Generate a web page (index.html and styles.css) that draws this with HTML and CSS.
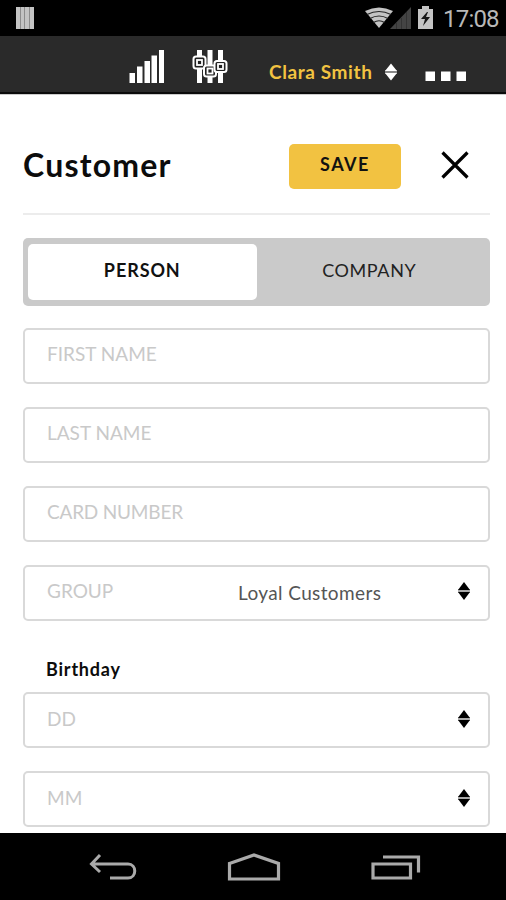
FILE: index.html
```html
<!DOCTYPE html>
<html lang="en">
<head>
<meta charset="utf-8">
<title>Customer</title>
<link rel="stylesheet" href="styles.css">
</head>
<body>
<div class="screen">
  <div class="status">
    <svg class="bars" width="18" height="22" viewBox="0 0 18 22"><path fill="#c4c4c4" d="M0 0h18v22H0z"/><path stroke="#8d8d8d" d="M4.5 0v22M8.5 0v22M13.5 0v22"/></svg>
    <svg class="signals" width="72" height="24" viewBox="0 0 72 24">
      <path fill="#c4c4c4" d="M0 5Q14-2 28 5L14 22z"/>
      <path fill="none" stroke="#262626" stroke-width="1.2" d="M2 8.500Q14 2.500 26 8.500M5 12.500Q14 7.500 23 12.500M8.500 16.500Q14 13 19.500 16.500"/>
      <path fill="#444" d="M46 1v22H25z"/><path stroke="#333" d="M31.500 17v6M36.500 12v11M41.500 6v17"/>
      <path fill="#c4c4c4" d="M57 0h7v3h4v20H53V3h4z"/><path fill="#171717" d="M62 6l-6 7h4l-2 7 7-9h-4l2-5z"/>
    </svg>
    <span class="clock">17:08</span>
  </div>
  <header class="topbar">
    <svg class="chart" width="36" height="36" viewBox="0 0 36 36"><path fill="#fff" d="M.5 24H6v10H.500zM8 17.500h5.500V34H8zM15.500 12H21v22h-5.500zM22.500 6.500H28V34h-5.500zM30 1h5v33h-5z"/></svg>
    <svg class="sliders" width="36" height="36" viewBox="0 0 36 36"><path fill="#fff" d="M5 1h5v33H5zM15.500 1h5v33h-5zM26 1h5v33h-5z"/><g fill="#222" stroke="#fff" stroke-width="2"><rect x="1.500" y="7.500" width="12" height="12" rx="2.500"/><rect x="12" y="16.500" width="12" height="11" rx="2.500"/><rect x="22.500" y="12" width="12" height="11" rx="2.500"/></g><g fill="#222" stroke="#fff" stroke-width="1.800"><rect x="5" y="11" width="5" height="5"/><rect x="15.500" y="19.500" width="5" height="5"/><rect x="26" y="15" width="5" height="5"/></g></svg>
    <span class="user">Clara Smith</span>
    <svg class="updown" width="12" height="18" viewBox="0 0 12 18"><path fill="#888" d="M0 7h12v4H0z"/><path fill="#fff" d="M6 .5L12 8H0zM0 10h12l-6 7.500z"/></svg>
    <svg class="more" width="42" height="10" viewBox="0 0 42 10"><path fill="#fff" d="M.5.5H10V10H.500zM16 .500h9.500V10H16zM31.500.500H41V10h-9.500z"/></svg>
  </header>
  <main class="page">
    <div class="heading">
      <h1>Customer</h1>
      <button class="save"><span>SAVE</span></button>
      <svg class="close" width="28" height="28" viewBox="0 0 28 28"><path stroke="#000" stroke-width="3.2" d="M1.500 1.500l25 25M26.500 1.500l-25 25"/></svg>
    </div>
    <div class="tabs"><div class="tab active"><span class="person">PERSON</span></div><div class="tab"><span class="company">COMPANY</span></div></div>
    <div class="field"><span class="first">FIRST NAME</span></div>
    <div class="field"><span class="last">LAST NAME</span></div>
    <div class="field"><span class="card">CARD NUMBER</span></div>
    <div class="field"><span class="group">GROUP</span><span class="value">Loyal Customers</span>
      <svg class="pick" width="12" height="18" viewBox="0 0 12 18"><path fill="#aaa" d="M0 7h12v4H0z"/><path fill="#000" d="M6 0L12 8H0zM0 10h12l-6 8z"/></svg></div>
    <h2>Birthday</h2>
    <div class="field date"><span class="day">DD</span>
      <svg class="pick" width="12" height="18" viewBox="0 0 12 18"><path fill="#aaa" d="M0 7h12v4H0z"/><path fill="#000" d="M6 0L12 8H0zM0 10h12l-6 8z"/></svg></div>
    <div class="field date"><span class="month">MM</span>
      <svg class="pick" width="12" height="18" viewBox="0 0 12 18"><path fill="#aaa" d="M0 7h12v4H0z"/><path fill="#000" d="M6 0L12 8H0zM0 10h12l-6 8z"/></svg></div>
  </main>
  <nav class="nav">
    <svg width="48" height="28" viewBox="0 0 48 28"><path fill="none" stroke="#aaa" stroke-width="3" d="M11 2L2.500 11 11 19M3 11h36c9 0 9 14 0 14H21"/></svg>
    <svg width="54" height="28" viewBox="0 0 54 28"><path fill="none" stroke="#aaa" stroke-width="3.200" d="M2.500 10.500L27 2l24.500 8.500V26h-49z"/></svg>
    <svg width="50" height="28" viewBox="0 0 50 28"><path fill="none" stroke="#aaa" stroke-width="3.200" d="M2 11h37.500v14H2zM12 4h35.500v15.500"/></svg>
  </nav>
</div>
</body>
</html>
```
FILE: styles.css
```css
* { box-sizing: border-box; }
body { margin: 0; background: #fff; color: #0c0c0c; font-family: Lato, sans-serif; }
.screen { width: 506px; height: 900px; display: flex; flex-direction: column; overflow: hidden; }
svg { display: block; flex: none; }
span, h1, h2 { white-space: nowrap; }
.status { height: 36px; flex: none; background: #000; display: flex; align-items: center; padding: 0 7px 0 16px; }
.signals { margin-left: auto; margin-right: 6px; }
.clock { font: 24px/36px Roboto, sans-serif; color: #b8b8b8; letter-spacing: -0.8px; width: 56px; padding-top: 2px; }
.topbar { height: 58px; flex: none; background: #2a2a2a; border-bottom: 2px solid #0b0b0b; display: flex; align-items: flex-start; padding: 13px 0 0 129px; }
.sliders { margin-left: 27px; }
.user { margin: 11px 0 0 41px; width: 116px; font-size: 19px; line-height: 24px; font-weight: 700; color: #f2c341; letter-spacing: 0.6px; }
.updown { margin-top: 14px; }
.more { margin: 22px 0 0 28px; }
.page { flex: 1; min-height: 0; padding: 0 16px 0 23px; overflow: hidden; border-top: 1px solid #ccc; }
.heading { height: 120px; border-bottom: 2px solid #ececec; display: flex; align-items: flex-start; }
h1 { margin: 50px 0 0; width: 266px; font-size: 32px; line-height: 40px; font-weight: 700; letter-spacing: 1.2px; }
.save { margin: 49px 40px 0 0; width: 112px; height: 45px; padding: 0 0 6px; border: 0; border-radius: 5px; background: #f2c241; color: #111; font: 700 18px/22px Lato, sans-serif; letter-spacing: 1.5px; }
.close { margin-top: 56px; }
.tabs { margin: 23px 0 22px; height: 68px; border-radius: 5px; padding: 6px 5px; background: #cacaca; display: flex; }
.tab { flex: 1; display: flex; align-items: center; justify-content: center; font-size: 18px; line-height: 22px; padding-bottom: 5px; border-radius: 5px; color: #222; letter-spacing: 0.6px; }
.company { margin-right: 3px; }
.active { background: #fff; color: #111; font-weight: 700; letter-spacing: 0.9px; }
.field { height: 56px; margin-bottom: 23px; border: 2px solid #d9d9d9; border-radius: 5px; display: flex; align-items: center; padding: 0 18px 5px 22px; font-size: 19px; line-height: 24px; color: #c9c9c9; }
.date { padding-bottom: 3px; }
.card { letter-spacing: -0.2px; }
.value { margin: 5px 0 0 auto; width: 220px; color: #555; font-size: 19px; letter-spacing: 0.38px; }
.value + .pick { margin-left: 0; }
.pick { margin-left: auto; }
h2 { margin: 36px 0 11px 23px; font-size: 18px; line-height: 24px; font-weight: 700; letter-spacing: 0.8px; }
.nav { height: 67px; flex: none; background: #000; display: flex; justify-content: space-between; align-items: flex-start; padding: 20px 85px 0 89px; }
```
